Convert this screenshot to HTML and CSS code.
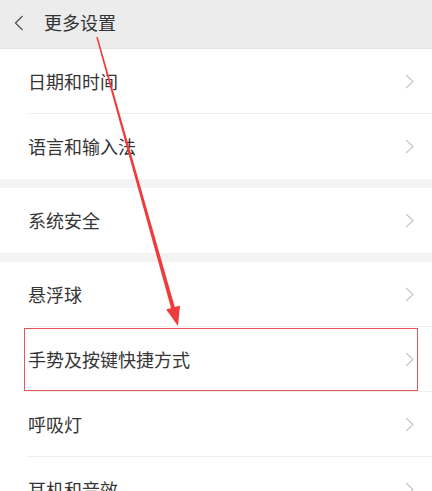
FILE: index.html
```html
<!DOCTYPE html>
<html lang="zh-CN">
<head>
<meta charset="utf-8">
<title>更多设置</title>
<link rel="stylesheet" href="styles.css">
</head>
<body>
<div class="screen">
  <header class="topbar">
    <svg class="back" viewBox="0 0 10 16" width="10" height="16"><path d="M8.5 1 L1.5 8 L8.5 15" fill="none" stroke="#555" stroke-width="1.3"/></svg>
    <span class="title">更多设置</span>
  </header>

  <section class="group">
    <div class="row"><span class="label">日期和时间</span><svg class="chev" viewBox="0 0 9 15" width="9" height="15"><path d="M1 1 L8 7.5 L1 14" fill="none" stroke="#c4c4c4" stroke-width="1.1"/></svg></div>
    <div class="row"><span class="label">语言和输入法</span><svg class="chev" viewBox="0 0 9 15" width="9" height="15"><path d="M1 1 L8 7.5 L1 14" fill="none" stroke="#c4c4c4" stroke-width="1.1"/></svg></div>
  </section>

  <section class="group">
    <div class="row"><span class="label">系统安全</span><svg class="chev" viewBox="0 0 9 15" width="9" height="15"><path d="M1 1 L8 7.5 L1 14" fill="none" stroke="#c4c4c4" stroke-width="1.1"/></svg></div>
  </section>

  <section class="group">
    <div class="row"><span class="label">悬浮球</span><svg class="chev" viewBox="0 0 9 15" width="9" height="15"><path d="M1 1 L8 7.5 L1 14" fill="none" stroke="#c4c4c4" stroke-width="1.1"/></svg></div>
    <div class="row highlighted"><span class="label">手势及按键快捷方式</span><svg class="chev" viewBox="0 0 9 15" width="9" height="15"><path d="M1 1 L8 7.5 L1 14" fill="none" stroke="#c4c4c4" stroke-width="1.1"/></svg></div>
    <div class="row"><span class="label">呼吸灯</span><svg class="chev" viewBox="0 0 9 15" width="9" height="15"><path d="M1 1 L8 7.5 L1 14" fill="none" stroke="#c4c4c4" stroke-width="1.1"/></svg></div>
    <div class="row"><span class="label">耳机和音效</span><svg class="chev" viewBox="0 0 9 15" width="9" height="15"><path d="M1 1 L8 7.5 L1 14" fill="none" stroke="#c4c4c4" stroke-width="1.1"/></svg></div>
  </section>

  <svg class="annot-arrow" viewBox="0 0 432 491" width="432" height="491">
    <polygon points="96.3,37.2 97.7,36.8 175.5,309.5 171.7,310.5" fill="#ee3b3b"/>
    <polygon points="178,326 180,305.5 166.2,309.5" fill="#ee3b3b"/>
  </svg>
</div>
</body>
</html>
```

FILE: styles.css
```css
html, body {
  margin: 0;
  padding: 0;
  background: #ffffff;
}

.screen {
  position: relative;
  width: 432px;
  height: 491px;
  overflow: hidden;
  font-family: "Noto Sans CJK SC", "Noto Sans", sans-serif;
  color: #353535;
}

.topbar {
  height: 48px;
  background: #ececec;
  border-bottom: 1px solid #e2e2e2;
  display: flex;
  align-items: flex-start;
  padding-top: 10px;
  box-sizing: border-box;
  height: 49px;
}

.back {
  margin-left: 14px;
  margin-top: 5px;
  flex: none;
}

.title {
  margin-left: 20px;
  font-size: 18px;
  line-height: 24px;
  color: #333;
}

.group {
  background: #fff;
}

.group + .group {
  border-top: 9px solid #f3f3f3;
}

.row {
  position: relative;
  height: 64px;
  display: flex;
  align-items: center;
  padding: 0 18px 0 28px;
  border-bottom: 1px solid transparent;
}

.row::after {
  content: "";
  position: absolute;
  left: 27px;
  right: 0;
  bottom: -1px;
  height: 1px;
  background: #efefef;
}

.row:last-child::after {
  display: none;
}

.label {
  flex: 1;
  font-size: 18px;
  line-height: 24px;
  color: #353535;
}

.chev {
  flex: none;
}

.highlighted::before {
  content: "";
  position: absolute;
  left: 24px;
  right: 14px;
  top: 1px;
  bottom: 0;
  border: 1px solid #e8555c;
}

.annot-arrow {
  position: absolute;
  left: 0;
  top: 0;
  pointer-events: none;
}
```
